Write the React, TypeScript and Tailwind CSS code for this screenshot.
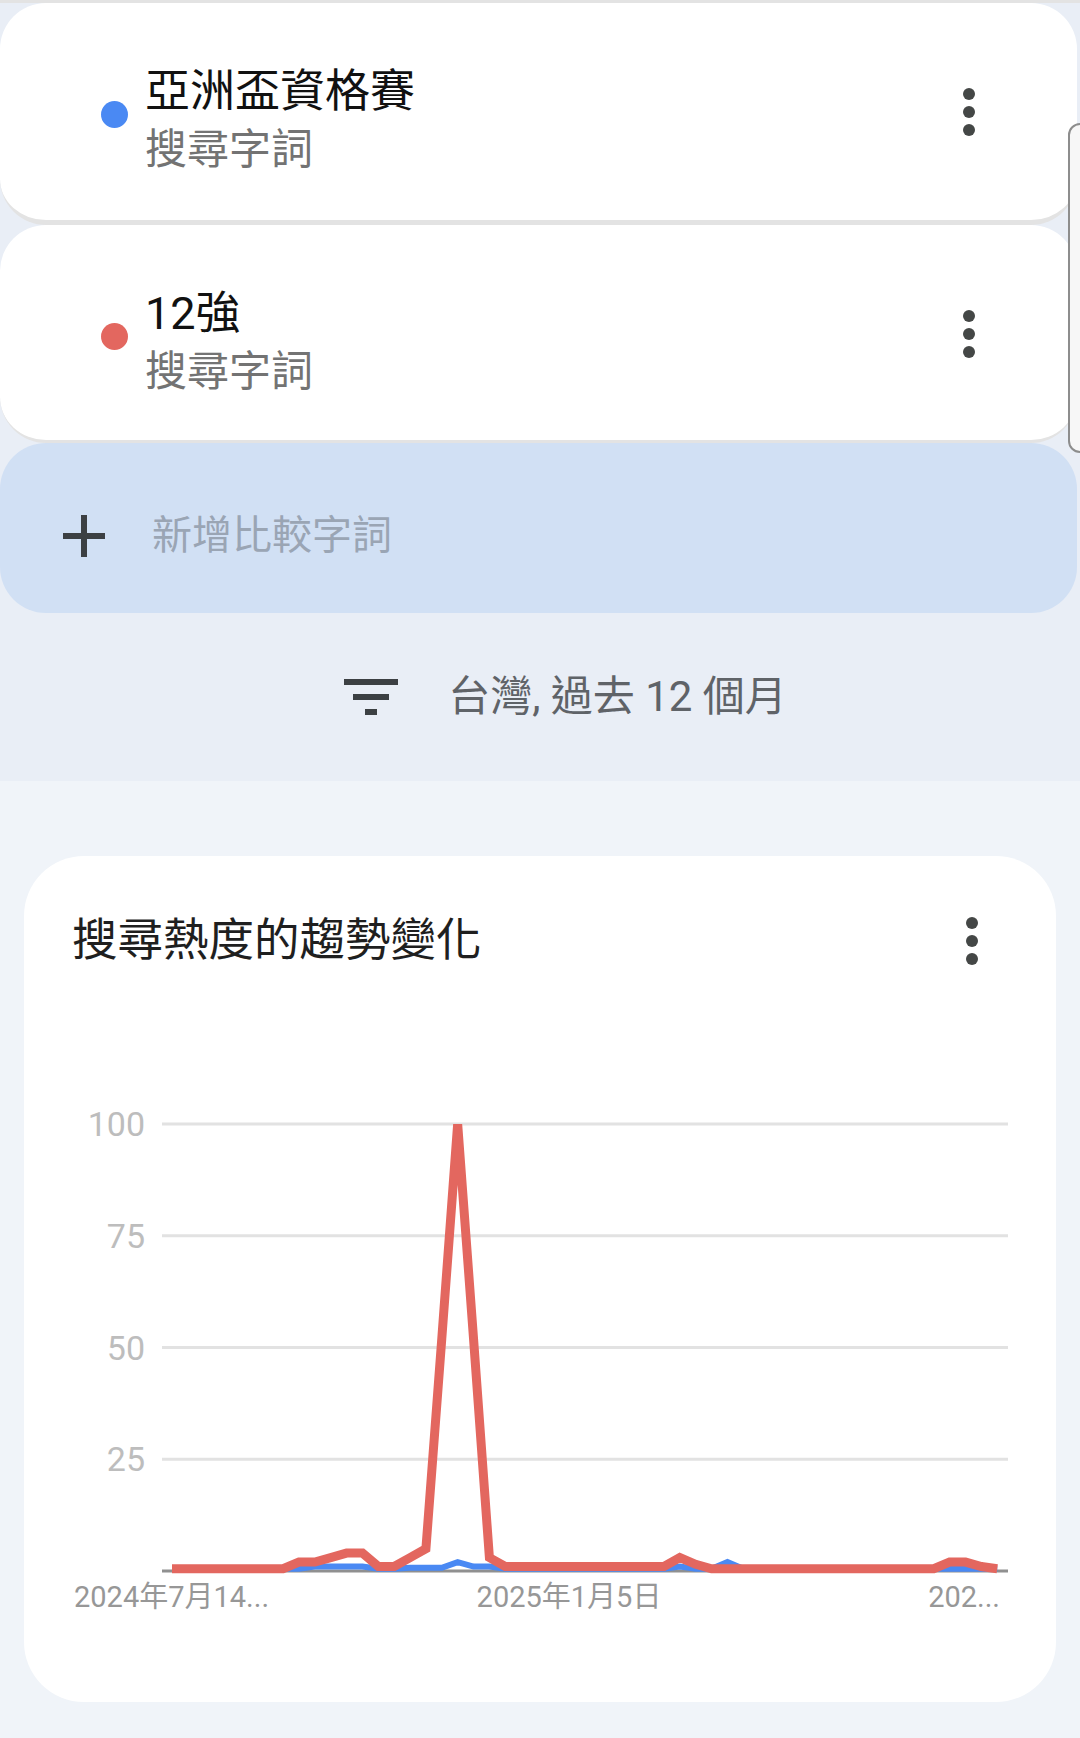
import React from 'react';

const red = [
  0.5, 0.5, 0.5, 0.5, 0.5, 0.5, 0.5, 0.5, 2, 2, 3, 4, 4, 1, 1, 3, 5, 52, 100, 52, 3,
  1, 1, 1, 1, 1, 1, 1, 1, 1, 1, 1, 3, 1.5,
  0.5, 0.5, 0.5, 0.5, 0.5, 0.5, 0.5, 0.5, 0.5, 0.5, 0.5, 0.5, 0.5, 0.5, 0.5, 2, 2, 1, 0.5,
];

const blue = [
  0.5, 0.5, 0.5, 0.5, 0.5, 0.5, 0.5, 0.5, 0.5, 1, 1, 1, 1, 0.5, 0.5, 0.7, 0.7, 0.7, 2, 1, 1,
  0.5, 0.5, 0.5, 0.5, 0.5, 0.5, 0.5, 0.5, 0.5, 0.5, 0.5, 1, 0.5, 0.5, 2,
  0.5, 0.5, 0.5, 0.5, 0.5, 0.5, 0.5, 0.5, 0.5, 0.5, 0.5, 0.5, 0.5, 0.5, 0.5, 0.5, 0.5,
];

const gy = (v: number) => 481 - v * 4.47;
const gx = (i: number) => 148 + i * 15.87;
const toPoints = (data: number[]) => data.map((v, i) => `${gx(i)},${gy(v)}`).join(' ');

const Kebab = () => (
  <svg width="12" height="48" viewBox="0 0 12 48" className="flex-none">
    <circle cx="6" cy="6" r="6" fill="#444746" />
    <circle cx="6" cy="24" r="6" fill="#444746" />
    <circle cx="6" cy="42" r="6" fill="#444746" />
  </svg>
);

const TermCard: React.FC<{ term: string; dot: string; className: string }> = ({ term, dot, className }) => (
  <div className={`mr-[3px] flex items-start rounded-[46px] border-[#e3e3e3] bg-white pl-[101px] pr-[102px] pt-[60px] ${className}`}>
    <div className="mt-[38px] h-[27px] w-[27px] flex-none rounded-full" style={{ backgroundColor: dot }} />
    <div className="ml-[17px] flex flex-col">
      <span className="text-[45px] leading-[58px] text-[#111111]">{term}</span>
      <span className="text-[42px] leading-[58px] text-[#737373]">搜尋字詞</span>
    </div>
    <div className="ml-auto mt-[25px]">
      <Kebab />
    </div>
  </div>
);

const TrendChart = () => (
  <svg width="1032" height="540" viewBox="0 0 1032 540" className="mt-[121px] block">
    <defs>
      <clipPath id="plot">
        <rect x="0" y="34" width="1032" height="506" />
      </clipPath>
    </defs>
    {[100, 75, 50, 25].map((v) => (
      <g key={v}>
        <line x1="138" x2="984" y1={gy(v)} y2={gy(v)} stroke="#e2e2e2" strokeWidth="3" />
        <text
          x="121"
          y={gy(v) + 12}
          textAnchor="end"
          fontSize="34"
          fill="#bdbdbd"
          fontFamily="Roboto, 'Noto Sans CJK TC', sans-serif"
        >
          {v}
        </text>
      </g>
    ))}
    <line x1="138" x2="984" y1="481" y2="481" stroke="#909090" strokeWidth="3" />
    <g clipPath="url(#plot)" fill="none">
      <polyline points={toPoints(blue)} stroke="#4a89f3" strokeWidth="6" strokeLinejoin="miter" />
      <polyline points={toPoints(red)} stroke="#e3675f" strokeWidth="9" strokeLinejoin="miter" />
    </g>
    <g fontSize="29" fill="#979797" fontFamily="Roboto, 'Noto Sans CJK TC', sans-serif">
      <text x="50" y="517">2024年7月14...</text>
      <text x="545" y="517" textAnchor="middle">2025年1月5日</text>
      <text x="976" y="517" textAnchor="end">202...</text>
    </g>
  </svg>
);

export default function App() {
  return (
    <div className="relative h-[1738px] w-[1080px] overflow-hidden bg-[#f0f4f9] font-[Roboto,'Noto_Sans_CJK_TC',sans-serif]">
      <section className="bg-[#e9eef6]">
        <div className="h-[3px] bg-[#e3e3e3]" />
        <TermCard term="亞洲盃資格賽" dot="#4a89f3" className="h-[222px] border-b-[5px]" />
        <TermCard term="12強" dot="#e3675f" className="h-[218px] border-b-[3px]" />

        <div className="mr-[3px] flex h-[170px] items-center rounded-[46px] bg-[#d1e0f4] pl-[63px] pt-[16px]">
          <svg width="42" height="42" viewBox="0 0 42 42" className="flex-none">
            <rect x="18" y="0" width="6" height="42" fill="#3c4043" />
            <rect x="0" y="18" width="42" height="6" fill="#3c4043" />
          </svg>
          <span className="ml-[47px] text-[40px] leading-[50px] text-[#9aa5b4]">新增比較字詞</span>
        </div>

        <div className="flex h-[168px] items-center justify-center pl-[42px]">
          <svg width="72" height="72" viewBox="0 0 24 24" className="flex-none">
            <path d="M10 18h4v-2h-4v2zM3 6v2h18V6H3zm3 7h12v-2H6v2z" fill="#3c4043" />
          </svg>
          <span className="ml-[41px] text-[42px] leading-[50px] text-[#5f6368]">台灣, 過去 12 個月</span>
        </div>
      </section>

      <div className="px-[24px] pt-[75px]">
        <div className="h-[846px] rounded-[60px] bg-white">
          <div className="flex items-center justify-between pl-[48px] pr-[78px] pt-[57px]">
            <h2 className="text-[45.5px] leading-[56px] text-[#1f1f1f]">搜尋熱度的趨勢變化</h2>
            <Kebab />
          </div>
          <TrendChart />
        </div>
      </div>

      <div className="absolute left-[1068px] top-[123px] h-[330px] w-[24px] rounded-l-[12px] border-2 border-[#8d8d8d] bg-[#f7f7f7]" />
    </div>
  );
}
